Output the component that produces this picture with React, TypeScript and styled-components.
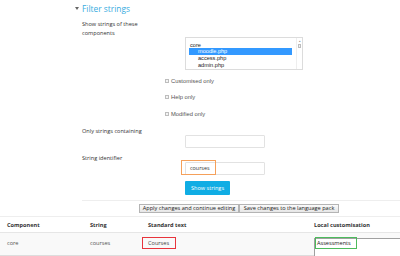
import React from "react";
import styled, { createGlobalStyle } from "styled-components";

const GlobalStyle = createGlobalStyle`
  html, body {
    margin: 0;
    padding: 0;
    background: #ffffff;
  }
  body {
    font-family: "Open Sans", "Liberation Sans", sans-serif;
    color: #333333;
  }
`;

const Page = styled.div`
  width: 400px;
  height: 256px;
  overflow: hidden;
  position: relative;
`;

const FilterForm = styled.div`
  padding-left: 75px;
`;

const Legend = styled.div`
  display: flex;
  align-items: center;
  gap: 3px;
  height: 16px;
  font-size: 8.4px;
  color: #38ace0;
  font-weight: 400;
`;

const Caret = styled.span`
  width: 0;
  height: 0;
  border-left: 2.5px solid transparent;
  border-right: 2.5px solid transparent;
  border-top: 3px solid #666;
`;

const FormRow = styled.div<{ $top?: number }>`
  display: flex;
  margin-top: ${(p) => p.$top ?? 0}px;
  padding-left: 7px;
`;

const Label = styled.div<{ $width?: number }>`
  width: ${(p) => p.$width ?? 103}px;
  flex-shrink: 0;
  font-size: 5.6px;
  line-height: 9px;
  color: #333;
`;

const ListBox = styled.div`
  margin-top: 17.5px;
  width: 116px;
  height: 31px;
  border: 1px solid #dcdcdc;
  display: flex;
  overflow: hidden;
`;

const Options = styled.div`
  flex: 1;
  padding: 3.5px 4px 0 3px;
  font-family: "Liberation Sans", Arial, sans-serif;
  font-size: 5.6px;
  color: #222;
`;

const Option = styled.div<{ $indent?: boolean; $selected?: boolean }>`
  height: 6.7px;
  line-height: 6.7px;
  padding-left: ${(p) => (p.$indent ? 9 : 1)}px;
  background: ${(p) => (p.$selected ? "#3399ff" : "transparent")};
  color: ${(p) => (p.$selected ? "#ffffff" : "#222")};
`;

const Scrollbar = styled.div`
  width: 5px;
  border-left: 1px solid #eeeeee;
  display: flex;
  flex-direction: column;
  align-items: center;
  font-size: 3px;
  color: #888;
  padding-top: 1px;
`;

const Thumb = styled.div`
  width: 3px;
  height: 4px;
  margin-top: 1px;
  border: 1px solid #bdbdbd;
  background: #f2f2f2;
  box-sizing: border-box;
`;

const CheckItem = styled.label`
  display: flex;
  align-items: center;
  gap: 2px;
  font-family: "Liberation Sans", Arial, sans-serif;
  font-size: 5.8px;
  color: #555;
  height: 9px;
`;

const Box = styled.span`
  width: 4px;
  height: 4px;
  border: 1px solid #bdbdbd;
  background: #f4f4f4;
  box-sizing: border-box;
`;

const InputWrap = styled.div`
  position: relative;
  margin-top: 8.5px;
`;

const TextInput = styled.div`
  width: 74px;
  height: 11px;
  border: 1px solid #e2e2e2;
  border-radius: 1px;
  font-size: 5.4px;
  line-height: 11px;
  padding-left: 4px;
  color: #333;
`;

const Mark = styled.span<{ $color: string }>`
  position: absolute;
  border: 1px solid ${(p) => p.$color};
  box-sizing: border-box;
  pointer-events: none;
`;

const PrimaryButton = styled.button`
  margin-top: 6px;
  width: 45px;
  height: 14px;
  padding: 0;
  border: none;
  border-radius: 1px;
  background: #10ade4;
  color: #ffffff;
  font-family: "Open Sans", sans-serif;
  font-size: 5.6px;
`;

const Divider = styled.div`
  margin: 5px 0 0 82px;
  border-top: 1px solid #eeeeee;
`;

const ActionBar = styled.div`
  display: flex;
  padding-left: 139px;
  margin-top: 3px;
`;

const GreyButton = styled.button`
  width: 100px;
  height: 9px;
  padding: 0;
  border: 1px solid #b4b4b4;
  background: linear-gradient(#fafafa, #e6e6e6);
  font-family: "Open Sans", sans-serif;
  font-size: 5.6px;
  line-height: 7px;
  color: #222;
`;

const Table = styled.div`
  margin-top: 3px;
  border-top: 1px solid #eeeeee;
`;

const Row = styled.div<{ $head?: boolean }>`
  display: grid;
  grid-template-columns: 83px 58px 166px 1fr;
  height: ${(p) => (p.$head ? 15 : 22)}px;
  align-items: ${(p) => (p.$head ? "center" : "start")};
  background: ${(p) => (p.$head ? "#ffffff" : "#f9f9f9")};
  border-bottom: 1px solid ${(p) => (p.$head ? "#e6e6e6" : "#dddddd")};
  font-size: 5.6px;
  font-weight: ${(p) => (p.$head ? 700 : 400)};
  color: ${(p) => (p.$head ? "#333" : "#555")};
`;

const Cell = styled.div<{ $pad?: number }>`
  padding-left: ${(p) => p.$pad ?? 7}px;
  position: relative;
`;

const BodyCell = styled(Cell)`
  padding-top: 6px;
  line-height: 8px;
`;

const Highlight = styled.span<{ $color: string }>`
  display: inline-block;
  border: 1px solid ${(p) => p.$color};
  padding: 1px 6px 1px 5px;
  margin-left: -6px;
  margin-top: -3px;
  line-height: 8px;
  color: #444;
`;

const TextArea = styled.div`
  margin-top: 5px;
  margin-left: 7px;
  height: 30px;
  border-top: 1px solid #a0a0a0;
  border-left: 1px solid #a0a0a0;
  background: #ffffff;
  position: relative;
`;

const TextAreaValue = styled.span`
  position: absolute;
  left: 0;
  top: -2px;
  width: 42px;
  height: 12px;
  border: 1px solid #4cbb5c;
  box-sizing: border-box;
  font-size: 5.6px;
  line-height: 10px;
  padding-left: 1px;
  color: #222;
`;

const App = () => {
  return (
    <Page>
      <GlobalStyle />
      <FilterForm>
        <Legend>
          <Caret />
          Filter strings
        </Legend>

        <FormRow $top={3.5}>
          <Label>
            Show strings of these
            <br />
            components
          </Label>
          <ListBox>
            <Options>
              <Option>core</Option>
              <Option $indent $selected>
                moodle.php
              </Option>
              <Option $indent>access.php</Option>
              <Option $indent>admin.php</Option>
            </Options>
            <Scrollbar>
              ▴
              <Thumb />
            </Scrollbar>
          </ListBox>
        </FormRow>

        <FormRow $top={6.5}>
          <Label $width={83} />
          <CheckItem>
            <Box />
            Customised only
          </CheckItem>
        </FormRow>
        <FormRow $top={7}>
          <Label $width={83} />
          <CheckItem>
            <Box />
            Help only
          </CheckItem>
        </FormRow>
        <FormRow $top={8}>
          <Label $width={83} />
          <CheckItem>
            <Box />
            Modified only
          </CheckItem>
        </FormRow>

        <FormRow $top={8}>
          <Label>Only strings containing</Label>
          <InputWrap>
            <TextInput />
          </InputWrap>
        </FormRow>

        <FormRow $top={5.5}>
          <Label>String identifier</Label>
          <InputWrap>
            <TextInput>courses</TextInput>
            <Mark $color="#f5a05a" style={{ left: -4, top: -2, width: 35, height: 15 }} />
          </InputWrap>
        </FormRow>

        <FormRow>
          <Label />
          <PrimaryButton>Show strings</PrimaryButton>
        </FormRow>
      </FilterForm>

      <Divider />

      <ActionBar>
        <GreyButton>Apply changes and continue editing</GreyButton>
        <GreyButton>Save changes to the language pack</GreyButton>
      </ActionBar>

      <Table>
        <Row $head>
          <Cell>Component</Cell>
          <Cell>String</Cell>
          <Cell>Standard text</Cell>
          <Cell>Local customisation</Cell>
        </Row>
        <Row>
          <BodyCell>core</BodyCell>
          <BodyCell>courses</BodyCell>
          <BodyCell>
            <Highlight $color="#e8343c">Courses</Highlight>
          </BodyCell>
          <Cell $pad={0}>
            <TextArea>
              <TextAreaValue>Assessments</TextAreaValue>
            </TextArea>
          </Cell>
        </Row>
      </Table>
    </Page>
  );
};

export default App;
